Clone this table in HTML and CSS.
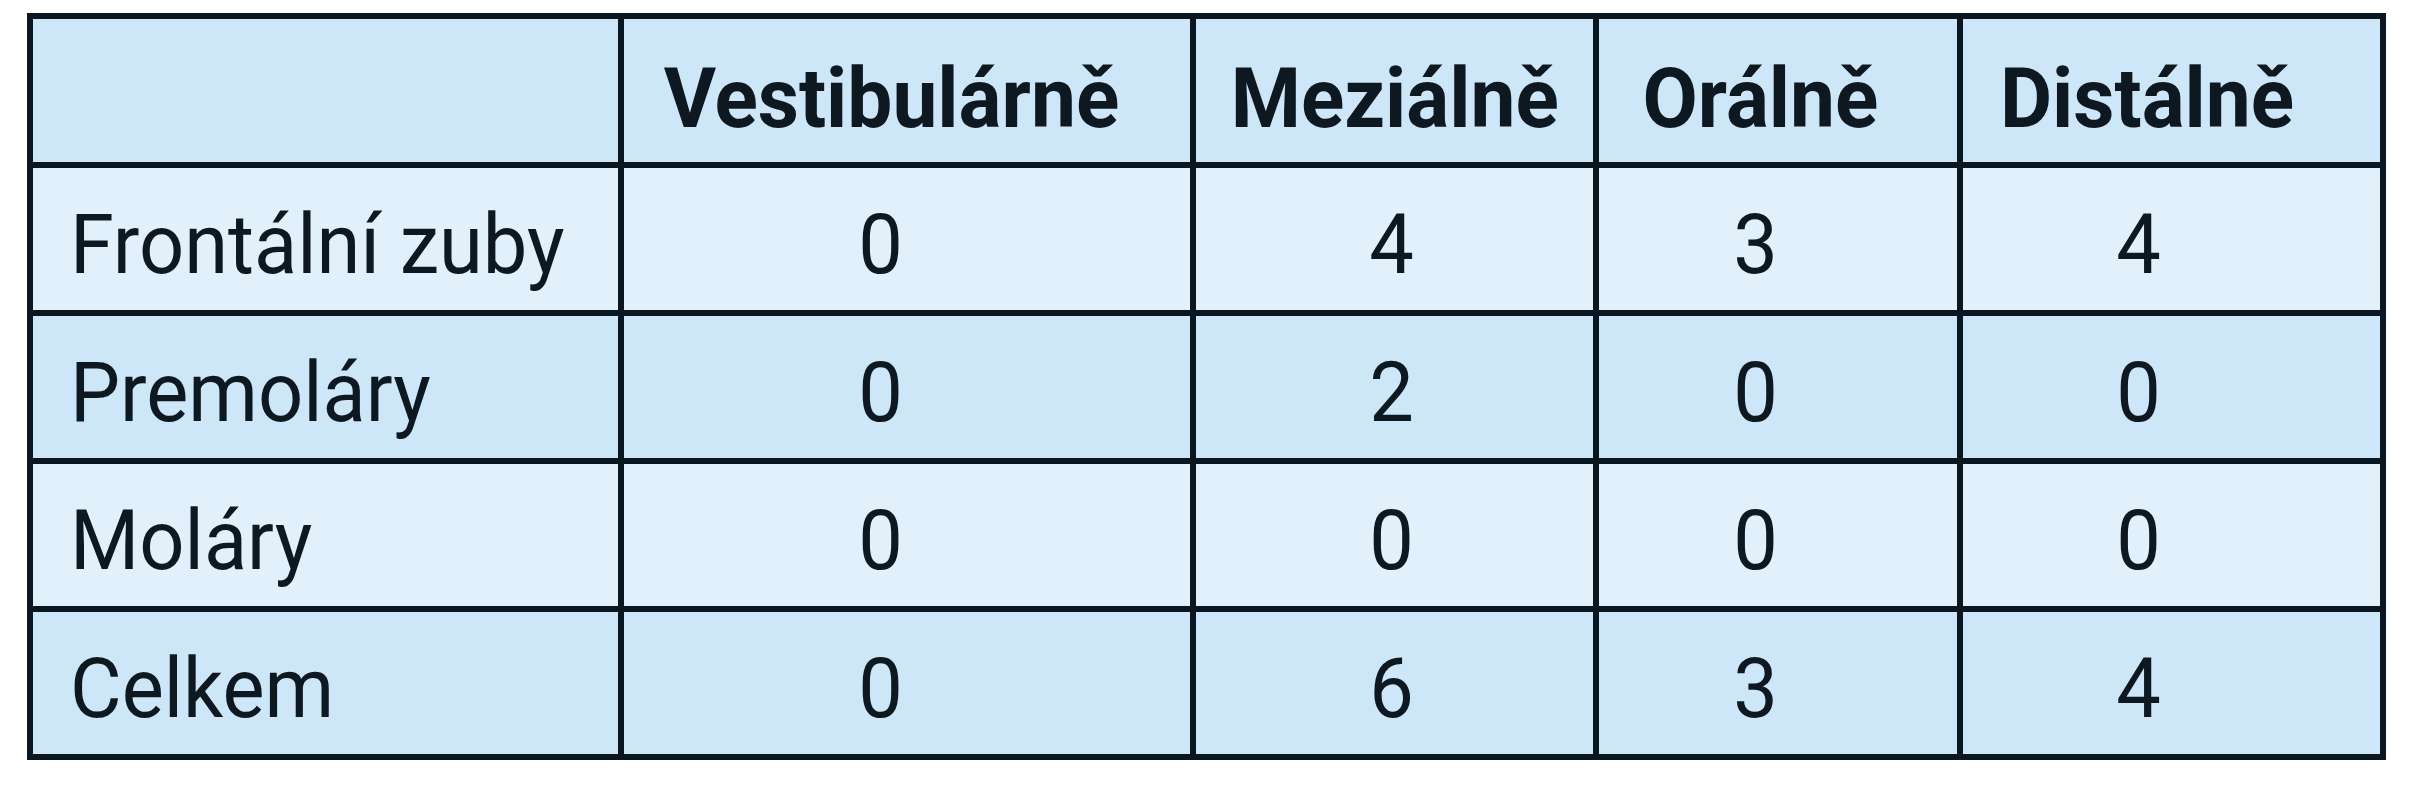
FILE: index.html
```html
<!DOCTYPE html>
<html lang="cs">
<head>
<meta charset="utf-8">
<title>Tabulka</title>
<link rel="stylesheet" href="styles.css">
</head>
<body>
<div class="grid">
  <div class="row head">
    <div class="cell label"></div>
    <div class="cell"><span class="t">Vestibulárně</span></div>
    <div class="cell"><span class="t">Meziálně</span></div>
    <div class="cell"><span class="t">Orálně</span></div>
    <div class="cell"><span class="t">Distálně</span></div>
  </div>
  <div class="row light">
    <div class="cell label"><span class="t">Frontální zuby</span></div>
    <div class="cell"><span class="t">0</span></div>
    <div class="cell"><span class="t">4</span></div>
    <div class="cell"><span class="t">3</span></div>
    <div class="cell"><span class="t">4</span></div>
  </div>
  <div class="row dark">
    <div class="cell label"><span class="t">Premoláry</span></div>
    <div class="cell"><span class="t">0</span></div>
    <div class="cell"><span class="t">2</span></div>
    <div class="cell"><span class="t">0</span></div>
    <div class="cell"><span class="t">0</span></div>
  </div>
  <div class="row light">
    <div class="cell label"><span class="t">Moláry</span></div>
    <div class="cell"><span class="t">0</span></div>
    <div class="cell"><span class="t">0</span></div>
    <div class="cell"><span class="t">0</span></div>
    <div class="cell"><span class="t">0</span></div>
  </div>
  <div class="row dark">
    <div class="cell label"><span class="t">Celkem</span></div>
    <div class="cell"><span class="t">0</span></div>
    <div class="cell"><span class="t">6</span></div>
    <div class="cell"><span class="t">3</span></div>
    <div class="cell"><span class="t">4</span></div>
  </div>
</div>
</body>
</html>
```

FILE: styles.css
```css
html, body {
  margin: 0;
  padding: 0;
  background: #ffffff;
}

body {
  padding: 13px 0 0 27px;
  font-family: Roboto, "Liberation Sans", sans-serif;
  color: #0d1820;
}

.grid {
  display: grid;
  width: max-content;
  grid-template-columns: 585px 566px 397px 358px 417px;
  grid-template-rows: 143px 142px 142px 142px 142px;
  gap: 6px;
  padding: 6px;
  background: #0a1620;
}

.row {
  display: contents;
}

.cell {
  display: flex;
  align-items: center;
  justify-content: center;
  padding-top: 12px;
  box-sizing: border-box;
  font-size: 84px;
  line-height: 1;
  white-space: nowrap;
}

.t {
  display: inline-block;
  transform: scaleX(0.945);
  transform-origin: center;
}

.cell.label {
  justify-content: flex-start;
  padding-left: 37px;
}

.cell.label .t {
  transform-origin: left center;
}

/* data column offsets */
.cell:nth-child(2) { padding-right: 52px; }
.cell:nth-child(3) { padding-right: 6px; }
.cell:nth-child(4) { padding-right: 44px; }
.cell:nth-child(5) { padding-right: 66px; }

.head .cell {
  background: #cde6f8;
  font-weight: 700;
  padding-top: 16px;
}

.head .cell .t {
  transform: scaleX(0.955);
}

.head .cell:nth-child(2) { padding-right: 32px; }
.head .cell:nth-child(3) { padding-right: 0; }
.head .cell:nth-child(4) { padding-right: 36px; }
.head .cell:nth-child(5) { padding-right: 48px; }

.light .cell {
  background: #e2f0fb;
}

.dark .cell {
  background: #cde6f8;
}
```
